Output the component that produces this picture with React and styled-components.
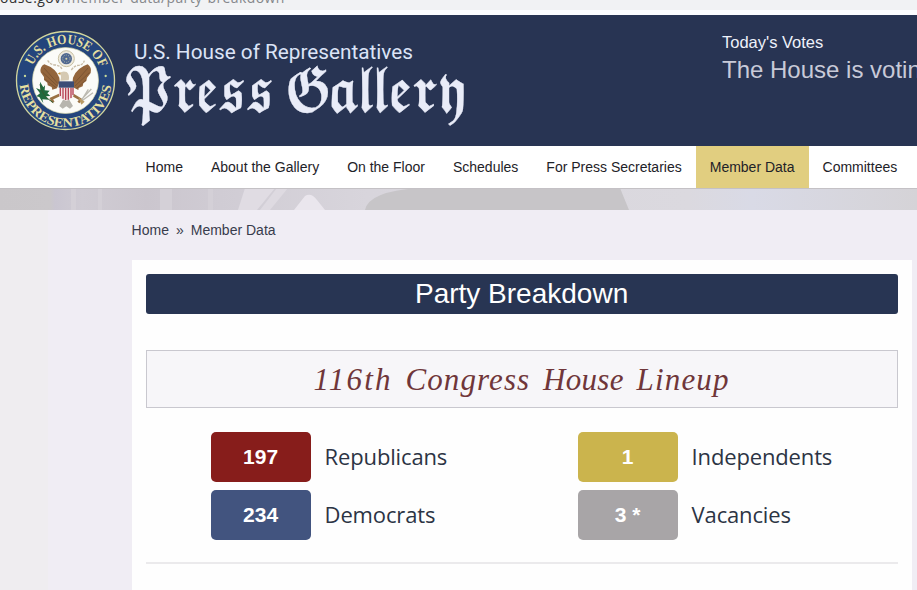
import React from 'react'
import styled, { createGlobalStyle } from 'styled-components'

const menu = [
  'Home',
  'About the Gallery',
  'On the Floor',
  'Schedules',
  'For Press Secretaries',
  'Member Data',
  'Committees',
]

const lineup = [
  { count: '197', label: 'Republicans', color: '#871d1b' },
  { count: '1', label: 'Independents', color: '#cbb44d' },
  { count: '234', label: 'Democrats', color: '#42547f' },
  { count: '3 *', label: 'Vacancies', color: '#a8a5a7' },
]

const Seal = () => (
  <SealSvg viewBox="0 0 360 360">
    <defs>
      <path id="arc-top" d="M83 137 A108 108 0 0 1 287 154" />
      <path id="arc-bottom" d="M44 195 A138 138 0 0 0 319 195" />
    </defs>
    <circle cx="181.500" cy="181.500" r="147" fill="#24457c" stroke="#d3d69c" strokeWidth="4" />
    <circle cx="181.500" cy="181.500" r="99" fill="#fbfbf8" stroke="#d9d9a7" strokeWidth="2" />
    <SealText $size={42}>
      <textPath href="#arc-top" textLength="258" lengthAdjust="spacingAndGlyphs">U.S. HOUSE OF</textPath>
    </SealText>
    <SealText $size={40}>
      <textPath href="#arc-bottom" textLength="408" lengthAdjust="spacingAndGlyphs">REPRESENTATIVES</textPath>
    </SealText>
    <circle cx="60" cy="168" r="3.500" fill="#c9dc9b" />
    <circle cx="302" cy="168" r="3.500" fill="#c9dc9b" />
    {/* glory of stars */}
    <circle cx="184" cy="116" r="24" fill="#eeeade" stroke="#c8c0a2" strokeWidth="3" />
    <circle cx="184" cy="116" r="17" fill="#4f6790" />
    <circle cx="184" cy="116" r="11" fill="none" stroke="#b8bfa9" strokeWidth="3" strokeDasharray="3 4" />
    <circle cx="184" cy="116" r="3" fill="#d7d3a6" />
    {/* ribbon */}
    <path d="M128 121 q8 14 24 14 q15 2 19 13 M199 150 q10 -14 21 -14 q14 -1 18 -14" fill="none" stroke="#c8bca6" strokeWidth="4" strokeDasharray="8 3" />
    {/* wings and body */}
    <path d="M118 133 Q104 140 107 157 L117 171 L117 180 L127 188 L128 196 L140 201 L142 209 L156 205 L164 184 L163 173 Q153 145 118 133Z" fill="#93653c" />
    <path d="M248 133 Q261 142 257 159 L246 173 L244 183 L235 190 L233 199 L221 204 L220 210 L207 203 L203 184 L204 173 Q215 144 248 133Z" fill="#93653c" />
    <path d="M117 144 L158 190 M113 157 L157 198 M121 178 L153 203 M249 144 L208 190 M253 158 L210 198 M243 180 L215 205" stroke="#7c5534" strokeWidth="3" />
    <path d="M166 182 Q171 169 164 160 Q172 151 185 156 Q195 164 191 181Z" fill="#d5c9b2" />
    <path d="M166 156 l-8 5 l8 3Z" fill="#c8953d" />
    <path d="M163 225 L139 236 L145 247 M204 225 L228 239 L220 247" fill="none" stroke="#9a7144" strokeWidth="8" />
    <path d="M177 235 L163 258 L173 266 L184 259 L195 266 L204 258 L190 235Z" fill="#b7b5ae" />
    {/* shield */}
    <path d="M162 185 H206 V224 Q205 236 184 243 Q163 236 162 224Z" fill="#f3e5e5" />
    <path d="M166 203 V228 M174 203 V236 M182 203 V240 M190 203 V239 M198 203 V234 M204 203 V225" stroke="#b74355" strokeWidth="4" />
    <path d="M161 184 H207 V203 H161Z" fill="#3c4c76" />
    {/* olive branch */}
    <path d="M105 185 L115 202 L120 196 L119 211 L134 212 L127 220 L136 228 L122 229 L131 239 L112 238 L115 250 L103 231 L94 229 L105 220 L93 204 L106 209Z" fill="#206a3d" />
    <path d="M105 193 Q110 228 145 248" fill="none" stroke="#315c30" strokeWidth="3" />
    {/* arrows */}
    <path d="M227 241 L259 207 M231 242 L264 218 M230 240 L250 208" stroke="#bcbab1" strokeWidth="4" />
    <path d="M220 231 L239 245 L229 254Z" fill="#b99b65" />
  </SealSvg>
)

const App = () => {
  return (
    <>
      <GlobalStyle />
      <AddressBar>
        <Url><b>house.gov</b>/member-data/party-breakdown</Url>
      </AddressBar>
      <Header>
        <Seal />
        <Wordmark viewBox="0 0 345 100">
          <Agency x="11" y="29" textLength="279" lengthAdjust="spacingAndGlyphs">U.S. House of Representatives</Agency>
          <GalleryName x="0" y="81" textLength="149" lengthAdjust="spacingAndGlyphs">𝕻𝖗𝖊𝖘𝖘</GalleryName>
          <GalleryName x="162" y="81" textLength="179" lengthAdjust="spacingAndGlyphs">𝕲𝖆𝖑𝖑𝖊𝖗𝖞</GalleryName>
        </Wordmark>
        <Votes>
          <small>Today's Votes</small>
          <span>The House is voting</span>
        </Votes>
      </Header>
      <Nav>
        {menu.map((item) => (
          <NavItem key={item} $active={item === 'Member Data'}>{item}</NavItem>
        ))}
      </Nav>
      <Banner viewBox="0 0 917 22" preserveAspectRatio="none">
        <defs>
          <linearGradient id="wall">
            <stop offset="0" stopColor="#cac7ca" />
            <stop offset=".055" stopColor="#cbc8cb" />
            <stop offset=".06" stopColor="#cac6d1" />
            <stop offset=".09" stopColor="#d0ccd4" />
            <stop offset=".16" stopColor="#cbc6ce" />
            <stop offset=".24" stopColor="#d0ccd4" />
            <stop offset=".4" stopColor="#d8d5dc" />
            <stop offset=".75" stopColor="#dbd9df" />
            <stop offset=".82" stopColor="#d9dae6" />
            <stop offset="1" stopColor="#d5d3d7" />
          </linearGradient>
        </defs>
        <rect width="917" height="22" fill="url(#wall)" />
        <path d="M71 0h5v22h-5Z M98 0h4v22h-4Z M160 0h12v22h-12Z M208 0h5v22h-5Z" fill="#d4d0d7" />
        <path d="M245 0H275L257 22H238Z" fill="#e0dce3" />
        <path d="M277 0H288L270 22H260Z" fill="#dedae1" />
        <path d="M294 22L305 8Q311 4 317 12L325 22Z" fill="#eae6ed" />
        <path d="M365 22Q369 3 420 0H620L629 22Z" fill="#c7c5c8" />
        <path d="M0 .5H917" stroke="#c4c1c5" />
      </Banner>
      <Page>
        <Breadcrumb>
          <span>Home</span>
          <span>»</span>
          <span>Member Data</span>
        </Breadcrumb>
        <Card>
          <Title>Party Breakdown</Title>
          <Congress>
            <Word $spacing={2.2}>116th</Word>{' '}
            <Word $spacing={1.1}>Congress</Word>{' '}
            <Word $spacing={0.3}>House</Word>{' '}
            <Word $spacing={1.2}>Lineup</Word>
          </Congress>
          <Lineup>
            {lineup.map((party) => (
              <Party key={party.label}>
                <Count $color={party.color}>{party.count}</Count>
                <Label>{party.label}</Label>
              </Party>
            ))}
          </Lineup>
        </Card>
      </Page>
    </>
  )
}

export default App

const GlobalStyle = createGlobalStyle`
    *{
        box-sizing: border-box;
    }
    body{
        margin: 0;
        height: 590px;
        overflow: hidden;
        background: #f0eef4;
        font-family: "Liberation Sans", Arial, sans-serif;
    }
`;

const AddressBar = styled.div`
    height: 15px;
    background: #f1f2f4;
    border-bottom: 5px solid #fcfdff;
    overflow: hidden;
    display: flex;
    align-items: flex-end;
    justify-content: flex-start;
`;

const Url = styled.span`
    margin-left: -9px;
    font: 14px/20px "Open Sans", sans-serif;
    letter-spacing: 0.4px;
    color: #85878b;
    white-space: nowrap;
    margin-bottom: 2px;

    b{
        font-weight: 400;
        color: #333;
    }
`;

const Header = styled.header`
    height: 131px;
    background: #283453;
    display: flex;
    align-items: flex-start;
    overflow: hidden;
`;

const SealSvg = styled.svg`
    width: 120px;
    height: 120px;
    margin: 5px 0 0 5px;
    flex: none;
`;

const SealText = styled.text`
    font: 700 ${(props) => props.$size}px "Liberation Serif", serif;
    fill: #e5dfa0;
`;

const Wordmark = styled.svg`
    width: 345px;
    height: 100px;
    margin: 15px 0 0 -2px;
    flex: none;
`;

const Agency = styled.text`
    font: 20px Roboto, sans-serif;
    fill: #dce4f7;
`;

const GalleryName = styled.text`
    font: 57px "DejaVu Math TeX Gyre", "Liberation Serif", serif;
    letter-spacing: -4px;
    fill: #e9ecf8;
    stroke: #e9ecf8;
    stroke-width: 0.4px;
`;

const Votes = styled.div`
    margin: 17px 0 0 254px;
    display: flex;
    flex-direction: column;
    white-space: nowrap;

    small{
        font-size: 16.5px;
        line-height: 21px;
        color: #eef1fa;
    }
    span{
        font-size: 24px;
        line-height: 28px;
        margin-top: 3px;
        color: #c8cad8;
    }
`;

const Nav = styled.nav`
    height: 42px;
    padding-left: 131.6px;
    background: #fff;
    display: flex;
    overflow: hidden;
`;

const NavItem = styled.a`
    flex: none;
    padding: 0 14px;
    font-size: 14px;
    line-height: 42px;
    color: #1e2228;
    background: ${(props) => (props.$active ? '#e1ce80' : 'transparent')};
`;

const Banner = styled.svg`
    display: block;
    width: 100%;
    height: 22px;
`;

const Page = styled.main`
    height: 380px;
    padding-left: 131.6px;
    background: linear-gradient(90deg, #efedf0 48px, #f0edf4 48px);
`;

const Breadcrumb = styled.div`
    height: 50px;
    padding-top: 10px;
    display: flex;
    gap: 7px;
    font-size: 14px;
    line-height: 20px;
    color: #383c4c;
`;

const Card = styled.section`
    width: 780px;
    height: 340px;
    padding: 14px;
    background: #fefefe;
`;

const Title = styled.h1`
    margin: 0;
    height: 40px;
    border-radius: 3px;
    background: #283553;
    color: #fff;
    font-size: 28px;
    font-weight: 400;
    line-height: 39px;
    text-align: center;
`;

const Congress = styled.h2`
    margin: 36px 0 0;
    height: 58px;
    border: 1px solid #c9c8cf;
    background: #f7f6f9;
    color: #70363a;
    font: italic 400 31px/58px "Liberation Serif", serif;
    word-spacing: 5px;
    text-align: center;
    white-space: nowrap;
`;

const Word = styled.span`
    letter-spacing: ${(props) => props.$spacing}px;
`;

const Lineup = styled.div`
    display: grid;
    grid-template-columns: 367px 1fr;
    grid-auto-rows: 50px;
    row-gap: 8px;
    padding: 24px 0 22px 65px;
    border-bottom: 2px solid #ebeaec;
`;

const Party = styled.div`
    display: flex;
    align-items: center;
    gap: 14px;
`;

const Count = styled.span`
    width: 100px;
    height: 50px;
    border-radius: 5px;
    background: ${(props) => props.$color};
    color: #fff;
    font-size: 21px;
    font-weight: 700;
    line-height: 50px;
    text-align: center;
`;

const Label = styled.span`
    font: 22px/48px "Open Sans", sans-serif;
    letter-spacing: -0.15px;
    margin-bottom: 2px;
    color: #2c3444;
`;
